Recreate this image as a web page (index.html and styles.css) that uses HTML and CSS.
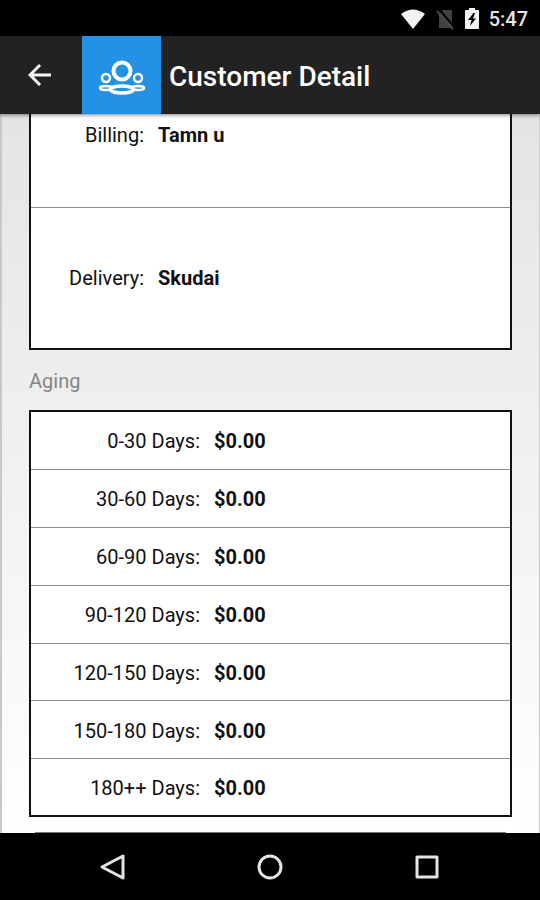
FILE: index.html
```html
<!DOCTYPE html>
<html lang="en">
<head>
    <meta charset="UTF-8">
    <meta name="viewport" content="width=device-width, initial-scale=1">
    <title>Customer Detail</title>
    <link rel="stylesheet" href="styles.css">
</head>
<body>
    <div class="status-bar">
        <svg class="wifi" width="26" height="20" viewBox="0 0 26 20">
            <path d="M1 5Q13-4 25 5L13 20Z" fill="#f2f2f2"/>
        </svg>
        <svg class="no-sim" width="19" height="22" viewBox="0 0 19 22">
            <path d="M3 6L7 2H16V20H3Z" fill="#424242"/>
            <path d="M3 1L19 20" stroke="#000" stroke-width="2"/>
            <path d="M1 3L17 21" stroke="#4a4a4a" stroke-width="2"/>
        </svg>
        <svg class="battery" width="14" height="21" viewBox="0 0 14 21">
            <path d="M4 0H10V2H13Q14 2 14 3V20Q14 21 13 21H1Q0 21 0 20V3Q0 2 1 2H4Z" fill="#f2f2f2"/>
            <path d="M8.500 5L3 12H6.500L5 18L11 10.500H8L10 5Z" fill="#000"/>
        </svg>
        <span class="clock">5:47</span>
    </div>

    <header class="header">
        <button class="back" type="button" aria-label="Back">
            <svg width="24" height="24" viewBox="0 0 24 24" fill="none" stroke="#f5f5f5" stroke-width="3">
                <path d="M23 12H2M12 2L2 12L12 22"/>
            </svg>
        </button>
        <div class="app-icon">
            <svg width="48" height="36" viewBox="0 0 48 36" fill="none" stroke="#fff">
                <circle cx="8" cy="19" r="4" stroke-width="2.500"/>
                <circle cx="40" cy="19" r="4" stroke-width="2.500"/>
                <ellipse cx="8" cy="29" rx="6" ry="2" stroke-width="2.500"/>
                <ellipse cx="40" cy="29" rx="6" ry="2" stroke-width="2.500"/>
                <circle cx="24" cy="12" r="8.500" stroke-width="4"/>
                <ellipse cx="24" cy="30.500" rx="11.500" ry="3.500" fill="#2492e4" stroke-width="3.500"/>
            </svg>
        </div>
        <h1>Customer Detail</h1>
    </header>

    <main class="content">
        <table class="panel address">
            <tr><th scope="row">Billing:</th><td>Tamn u</td></tr>
            <tr><th scope="row">Delivery:</th><td>Skudai</td></tr>
        </table>

        <h2>Aging</h2>
        <table class="panel aging">
            <tr><th scope="row">0-30 Days:</th><td>$0.00</td></tr>
            <tr><th scope="row">30-60 Days:</th><td>$0.00</td></tr>
            <tr><th scope="row">60-90 Days:</th><td>$0.00</td></tr>
            <tr><th scope="row">90-120 Days:</th><td>$0.00</td></tr>
            <tr><th scope="row">120-150 Days:</th><td>$0.00</td></tr>
            <tr><th scope="row">150-180 Days:</th><td>$0.00</td></tr>
            <tr><th scope="row">180++ Days:</th><td>$0.00</td></tr>
        </table>
        <div class="next-card"></div>
    </main>

    <nav class="nav-bar">
        <button type="button" aria-label="Back">
            <svg width="28" height="28" viewBox="0 0 28 28" fill="none" stroke="#e4e4e4" stroke-width="3" stroke-linejoin="round">
                <path d="M24 3V25L3 14Z"/>
            </svg>
        </button>
        <button type="button" aria-label="Home">
            <svg width="28" height="28" viewBox="0 0 28 28" fill="none" stroke="#e4e4e4" stroke-width="3">
                <circle cx="14" cy="14" r="11"/>
            </svg>
        </button>
        <button type="button" aria-label="Recent apps">
            <svg width="28" height="28" viewBox="0 0 28 28" fill="none" stroke="#e4e4e4" stroke-width="3" stroke-linejoin="round">
                <path d="M4 4H24V24H4Z"/>
            </svg>
        </button>
    </nav>
</body>
</html>
```
FILE: styles.css
```css
* {
    box-sizing: border-box;
}
body {
    margin: 0;
    height: 100vh;
    display: flex;
    flex-direction: column;
    font-family: Roboto, sans-serif;
    font-size: 20px;
    line-height: 24px;
    color: #111;
    background: #000;
}
button {
    display: flex;
    align-items: center;
    justify-content: center;
    padding: 0;
    border: 0;
    background: none;
    cursor: pointer;
}
.status-bar {
    flex: none;
    height: 36px;
    display: flex;
    align-items: center;
    justify-content: flex-end;
    gap: 10px;
    padding: 1px 12px 0 0;
    color: #e6e6e6;
}
.clock {
    font-weight: 500;
}
.header {
    flex: none;
    height: 78px;
    display: flex;
    align-items: center;
    background: #222;
    box-shadow: 0 1px 4px rgba(0, 0, 0, 0.5);
    z-index: 1;
}
.header h1 {
    margin: 0;
    padding: 4px 8px 0;
    font-size: 28px;
    line-height: 32px;
    font-weight: 500;
    color: #fff;
}
.back {
    width: 82px;
    height: 78px;
    padding-right: 2px;
}
.app-icon {
    width: 79px;
    height: 78px;
    display: flex;
    align-items: center;
    justify-content: center;
    padding-top: 4px;
    background: #2492e4;
}
/* scrolled to the bottom: the first card runs under the header */
.content {
    flex: 1;
    min-height: 0;
    display: flex;
    flex-direction: column;
    justify-content: flex-end;
    overflow: hidden;
    padding: 0 27px;
    border: solid #c8c8c8;
    border-width: 0 1px 0 2px;
    background: linear-gradient(#e4e4e4, #f0f0f0 45%, #fff);
}
.content h2 {
    flex: none;
    margin: 0;
    padding: 19px 0 17px;
    font-size: 20px;
    line-height: 24px;
    font-weight: 400;
    color: #858585;
}
.panel {
    flex: none;
    width: 100%;
    border: 2px solid #111;
    border-spacing: 0;
    background: #fff;
}
.panel th,
.panel td {
    padding: 0;
    border-bottom: 1px solid #8c8c8c;
    text-align: left;
}
.panel tr:last-child th,
.panel tr:last-child td {
    border-bottom: 0;
}
.panel th {
    padding-right: 14px;
    font-weight: 400;
    text-align: right;
}
.panel td {
    font-weight: 700;
}
.address {
    height: 289px;
}
.address th {
    width: 127px;
}
.aging {
    height: 407px;
}
.aging th,
.aging td {
    padding-top: 2px;
}
.aging th {
    width: 183px;
}
.next-card {
    flex: none;
    height: 1px;
    margin: 15px 6px 0;
    background: #777;
}
.nav-bar {
    flex: none;
    height: 67px;
    display: flex;
    align-items: center;
    justify-content: center;
    gap: 101px;
}
.nav-bar button {
    width: 56px;
    height: 56px;
}
```
